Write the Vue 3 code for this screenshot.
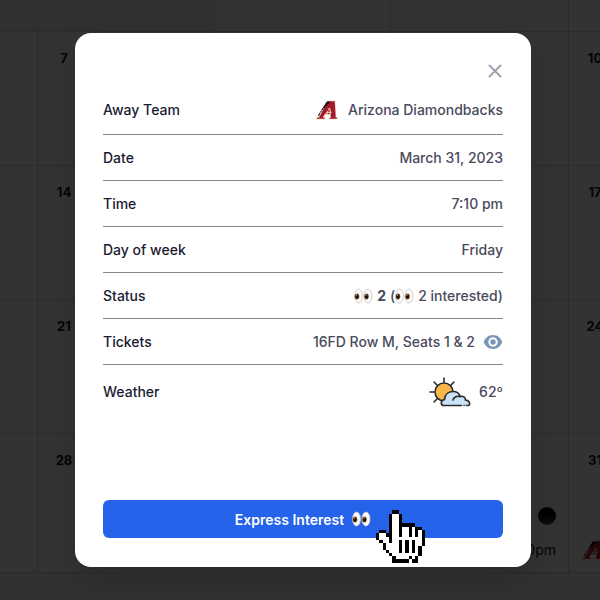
<script setup>
import { h } from 'vue'

const weeks = [
  { id: 'w0', days: ['', '', '', '', ''], short: true },
  { id: 'w1', days: ['', '7', '', '', '10'] },
  { id: 'w2', days: ['', '14', '', '', '17'] },
  { id: 'w3', days: ['', '21', '', '', '24'] },
  { id: 'w4', days: ['', '28', '', '', '31'], games: true },
]

const Eyes = () =>
  h('svg', { class: 'eyes', viewBox: '0 0 38 32', 'aria-hidden': 'true' }, [
    [9, 7], [28, 26],
  ].map(([cx, px]) => h('g', [
    h('ellipse', { cx, cy: 16, rx: 8, ry: 14, fill: '#fbfbfb', stroke: '#c4c4c4', 'stroke-width': 1.6 }),
    h('ellipse', { cx: px - 1, cy: 17, rx: 4.6, ry: 6, fill: '#8a5a2b' }),
    h('ellipse', { cx: px - 1, cy: 17, rx: 3.2, ry: 4.4, fill: '#1c0f08' }),
    h('circle', { cx: px - 2, cy: 14, r: 1.2, fill: '#ffffff' }),
  ])))

const TeamLogo = () =>
  h('svg', { class: 'logo', viewBox: '0 0 66 60', 'aria-hidden': 'true' }, [
    h('path', { d: 'M33 2H58L61 51H65V58H39V51H43L42 44H27L24 51H28V58H1V51H7Z', fill: '#e3d4ad' }),
    h('path', { d: 'M35 4H56L59 53H63V56H41V53H45L44 42H26L20 53H26V56H3V53H9Z', fill: '#a71930' }),
    h('path', { d: 'M32 5H43L38 12H34L33 18H28L27 24H22L21 30H17L16 37H13L10 47H5Z', fill: '#161313' }),
    h('path', { d: 'M39 24L43 24L44 33L47 37L44 42L38 38L32 42L28 40L34 34Z', fill: '#e3d4ad' }),
    h('path', { d: 'M38 29L41 29L41 35L36 36Z', fill: '#a71930' }),
  ])

const pointer = [
  '.....XX........',
  '....XwwX.......',
  '....XwwX.......',
  '....XwwX.......',
  '....XwwXXXXX...',
  '....XwwXwwXwXX.',
  '.XX.XwwXwwXwXwX',
  'XwwXXwwXwwXwXwX',
  'XwwwXwwwwwwwwwX',
  '.XwwXwwXwXwXwwX',
  '..XwwwwXwXwXwwX',
  '..XwwwwXwXwXwX.',
  '...XwwwXwXwXwX.',
  '....XwwwwwwwwX.',
  '.....XwwwwXwX..',
  '.....XXXXXwXX..',
]
const cells = (ch) =>
  pointer.flatMap((row, y) =>
    [...row].map((c, x) => (c === ch ? `M${x} ${y}h1v1h-1z` : ''))).join('')
const outline = cells('X')
const fill = cells('w')
</script>

<template>
  <div class="page">
    <main class="calendar">
      <div v-for="week in weeks" :key="week.id" class="week" :class="{ short: week.short, last: week.games }">
        <div v-for="(day, i) in week.days" :key="i" class="day">
          <span class="num">{{ day }}</span>
          <template v-if="week.games && i === 3">
            <span class="ball"></span>
            <span class="game">7:10pm</span>
          </template>
          <div v-if="week.games && i === 4" class="team"><TeamLogo /></div>
        </div>
      </div>
      <div class="below"></div>
    </main>

    <div class="overlay">
      <section class="modal" role="dialog" aria-modal="true" aria-label="Game">
        <header class="top">
          <button class="close" type="button" aria-label="Close">
            <svg viewBox="0 0 14 14"><path d="M1.5 1.5L12.5 12.5M12.5 1.5L1.5 12.5" /></svg>
          </button>
        </header>
        <dl class="details">
          <div class="row first">
            <dt>Away Team</dt>
            <dd><TeamLogo /><span class="team-name">Arizona Diamondbacks</span></dd>
          </div>
          <div class="row"><dt>Date</dt><dd>March 31, 2023</dd></div>
          <div class="row"><dt>Time</dt><dd>7:10 pm</dd></div>
          <div class="row"><dt>Day of week</dt><dd>Friday</dd></div>
          <div class="row">
            <dt>Status</dt>
            <dd class="status">
              <Eyes /><b>2</b><span class="interested">(<Eyes /><span class="count">2 interested)</span></span>
            </dd>
          </div>
          <div class="row">
            <dt>Tickets</dt>
            <dd>
              16FD Row M, Seats 1 &amp; 2
              <svg class="view" viewBox="0 0 20 16" aria-hidden="true">
                <path d="M10 1C5.5 1 2.2 3.8 0.7 8C2.2 12.2 5.5 15 10 15S17.8 12.2 19.3 8C17.8 3.8 14.5 1 10 1Z" fill="#7c96b8" />
                <circle cx="10" cy="8" r="4.7" fill="#fff" />
                <circle cx="10" cy="8" r="2.7" fill="#7c96b8" />
              </svg>
            </dd>
          </div>
          <div class="row weather">
            <dt>Weather</dt>
            <dd>
              <svg class="sky" viewBox="0 0 42 30" aria-hidden="true">
                <g stroke="#2b2b2b" stroke-width="1.6" stroke-linecap="round">
                  <path d="M15 1V5M5 5L8 8M25 5L22 8M1 15H5M5 25L8 22" />
                  <circle cx="15" cy="15" r="9" fill="#f9b74a" />
                  <path d="M15 28.5C11.5 28.5 11 23.5 15.5 22.5C16 17 20 14.5 24 14.5C28 14.5 30.5 17 31 19.5C34 18.5 36.5 20.5 36.5 23C41 23.5 42 28.5 39 28.5H37.5M32.5 28.5H15" fill="#c9e2f8" />
                  <path d="M24 23C24.5 20.5 27.5 18.5 31 19.5M35 28.5H35.2" fill="none" />
                </g>
              </svg>
              <span>62º</span>
            </dd>
          </div>
        </dl>
        <div class="action">
          <button class="primary" type="button">Express Interest<Eyes /></button>
          <svg class="pointer" viewBox="0 0 15 16" shape-rendering="crispEdges" aria-hidden="true">
            <path :d="fill" fill="#fff" />
            <path :d="outline" fill="#000" />
          </svg>
        </div>
      </section>
    </div>
  </div>
</template>

<style>
body {
  margin: 0;
}
</style>

<style scoped>
.page {
  position: relative;
  min-height: 100vh;
  overflow: hidden;
  display: flex;
  font-family: Inter, "Liberation Sans", sans-serif;
  font-size: 14px;
  line-height: 20px;
  color: #111827;
}
.calendar {
  flex: 1;
  min-width: 0;
  display: flex;
  flex-direction: column;
  background: #fff;
}
.week {
  display: grid;
  grid-template-columns: 38px 177px 176px 178px 1fr;
  height: 134px;
  box-sizing: border-box;
  border-bottom: 1px solid #d1d5db;
}
.week.short {
  height: 32px;
}
.week.last {
  height: 139px;
}
.week.short .day:nth-child(-n + 2) {
  background: #f1f1f1;
}
.day {
  overflow: hidden;
  box-sizing: border-box;
  border-right: 1px solid #d1d5db;
  display: flex;
  flex-direction: column;
  padding-top: 16px;
}
.day:last-child {
  border-right: 0;
}
.num {
  width: 52px;
  height: 20px;
  text-align: center;
  font-size: 13px;
  font-weight: 700;
}
.ball {
  align-self: flex-end;
  width: 18px;
  height: 18px;
  margin: 37px 12px 0 0;
  border-radius: 50%;
  background: linear-gradient(#000 40%, #555);
}
.game {
  align-self: flex-end;
  margin: 15px 12px 0 0;
}
.team {
  margin: 70px 0 0 13px;
}
.below {
  flex: 1;
  min-height: 28px;
  background: #f5f5f5;
}
.overlay {
  position: absolute;
  inset: 0;
  display: flex;
  align-items: flex-start;
  padding: 33px 69px 33px 75px;
  background: rgba(0, 0, 0, 0.8);
}
.modal {
  flex: 1;
  min-width: 0;
  padding: 28px;
  border-radius: 16px;
  background: #fff;
  box-shadow: 0 12px 28px rgba(0, 0, 0, 0.16);
}
.top {
  display: flex;
  justify-content: flex-end;
}
.close {
  display: flex;
  padding: 3px 1px;
  border: 0;
  background: none;
}
.close svg {
  width: 14px;
  height: 14px;
  fill: none;
  stroke: #9ca3af;
  stroke-width: 2;
  stroke-linecap: round;
}
.details {
  margin: 0;
}
.row {
  display: flex;
  align-items: center;
  justify-content: space-between;
  height: 45px;
  border-bottom: 1px solid #888;
}
.row.first {
  height: 49px;
  padding-top: 4px;
}
.row.weather {
  height: 53px;
  border-bottom: 0;
}
dt {
  font-weight: 500;
  color: #1b1b30;
}
dd {
  display: flex;
  align-items: center;
  gap: 8px;
  margin: 0;
  font-weight: 500;
  color: #4a4a5c;
}
.logo {
  display: block;
  width: 22px;
  height: 20px;
}
.team-name {
  padding-left: 2px;
}
.status {
  gap: 4px;
}
.interested {
  display: flex;
  align-items: center;
}
.count {
  padding-left: 4px;
}
b {
  font-weight: 700;
}
.eyes {
  width: 19px;
  height: 16px;
}
.view {
  width: 20px;
  height: 16px;
}
.sky {
  width: 42px;
  height: 30px;
}
.action {
  position: relative;
  margin-top: 82px;
  padding-bottom: 1px;
}
.primary {
  display: flex;
  align-items: center;
  justify-content: center;
  gap: 8px;
  width: 100%;
  height: 38px;
  padding: 0;
  border: 0;
  border-radius: 6px;
  background: #2563eb;
  color: #fff;
  font-family: inherit;
  font-size: 14px;
  font-weight: 600;
}
.pointer {
  position: absolute;
  top: 10px;
  right: 78px;
  width: 49px;
  height: 53px;
}
</style>
